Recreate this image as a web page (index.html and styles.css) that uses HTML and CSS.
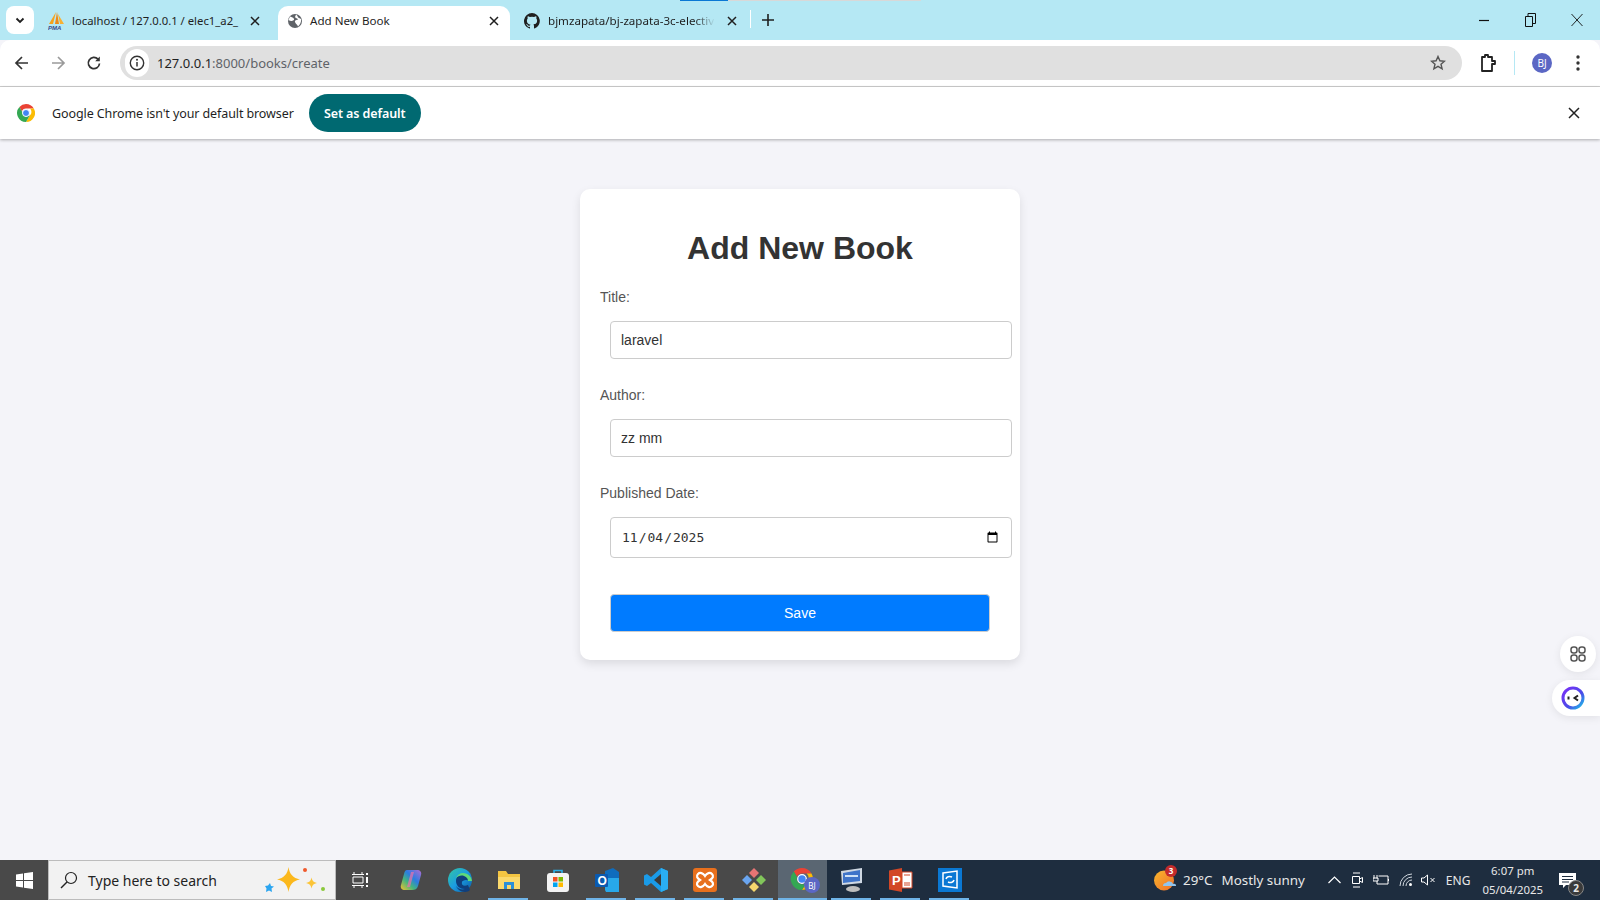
FILE: index.html
```html
<!DOCTYPE html>
<html lang="en">
<head>
    <meta charset="UTF-8">
    <title>Add New Book</title>
    <link rel="stylesheet" href="styles.css">
</head>
<body>
    <!-- Tab strip -->
    <div class="tabstrip">
        <div class="load-bar"><span></span></div>
        <div class="tab-search">
            <svg width="12" height="12" viewBox="0 0 12 12"><path d="M2.500 4.500 6 8l3.500-3.500" fill="none" stroke="#1f1f1f" stroke-width="1.800"/></svg>
        </div>
        <div class="tab tab-first">
            <svg class="fav" width="17" height="20" viewBox="0 0 17 20"><path d="M8 1 5 13H1z" fill="#f6a21c"/><path d="M9 1l2 12H7z" fill="#ef8a17"/><path d="M10 3l6 10h-4z" fill="#f8b133"/><text x="0" y="19" class="pma">PMA</text></svg>
            <span class="tab-title">localhost / 127.0.0.1 / elec1_a2_</span>
            <svg class="tab-x" width="10" height="10" viewBox="0 0 10 10"><path d="M1 1l8 8M9 1 1 9" stroke="#1f1f1f" stroke-width="1.500"/></svg>
        </div>
        <div class="tab tab-active">
            <svg class="fav" width="16" height="16" viewBox="0 0 16 16"><circle cx="8" cy="8" r="7" fill="#5f6368"/><path d="M3 3.500c2 .5 3.500 1 4 2.500S5 8 4 8 1.500 7 1.500 7zM9 1.500c2 1 1.500 3 3 3.500l2 1c.5 3-1 6-3 7.500-.5-2-2.500-2.500-3-4.500s2-2 3-2.500-3-1.500-3-2.500z" fill="#fff"/></svg>
            <span class="tab-title">Add New Book</span>
            <svg class="tab-x" width="10" height="10" viewBox="0 0 10 10"><path d="M1 1l8 8M9 1 1 9" stroke="#1f1f1f" stroke-width="1.500"/></svg>
        </div>
        <div class="tab tab-last">
            <svg class="fav" width="16" height="16" viewBox="0 0 16 16"><path fill="#1f1f1f" d="M8 0a8 8 0 0 0-2.500 15.600c.4.100.5-.2.500-.4v-1.400c-2.200.5-2.700-1-2.700-1-.4-.9-.9-1.200-.9-1.200-.7-.5.100-.5.100-.5.800.1 1.200.8 1.200.8.700 1.200 1.900.9 2.300.7.100-.5.300-.9.500-1.100-1.800-.2-3.600-.9-3.600-4 0-.9.300-1.600.8-2.100-.1-.2-.4-1 .1-2.100 0 0 .7-.2 2.200.8a7.600 7.600 0 0 1 4 0c1.500-1 2.200-.8 2.200-.8.400 1.100.2 1.900.1 2.100.5.600.8 1.300.8 2.100 0 3.100-1.900 3.700-3.700 3.900.3.300.6.800.6 1.500v2.200c0 .2.100.5.600.4A8 8 0 0 0 8 0z"/></svg>
            <span class="tab-title tab-fade">bjmzapata/bj-zapata-3c-electiv</span>
            <svg class="tab-x" width="10" height="10" viewBox="0 0 10 10"><path d="M1 1l8 8M9 1 1 9" stroke="#1f1f1f" stroke-width="1.500"/></svg>
        </div>
        <div class="tab-sep"></div>
        <svg class="tab-plus" width="12" height="12" viewBox="0 0 12 12"><path d="M6 0v12M0 6h12" stroke="#1f1f1f" stroke-width="1.600"/></svg>
        <div class="win-controls">
            <svg width="11" height="11" viewBox="0 0 11 11"><path d="M0 5.500h10" stroke="#111" stroke-width="1.200"/></svg>
            <svg width="11" height="14" viewBox="0 0 11 14"><path d="M.5 3.500h7v10h-7zM3 3.500V.5h7.500v10H7.500" fill="none" stroke="#111"/></svg>
            <svg width="12" height="14" viewBox="0 0 12 14"><path d="M.5 1l11 12M11.500 1 .5 13" stroke="#111" stroke-width=".9"/></svg>
        </div>
    </div>

    <!-- Toolbar -->
    <div class="toolbar">
        <div class="nav-btns">
            <svg width="16" height="16" viewBox="0 0 16 16"><path d="M14 8H2.500M8 2 2 8l6 6" fill="none" stroke="#333" stroke-width="1.700"/></svg>
            <svg width="16" height="16" viewBox="0 0 16 16"><path d="M2 8h11.500M8 2l6 6-6 6" fill="none" stroke="#9a9a9a" stroke-width="1.700"/></svg>
            <svg width="16" height="16" viewBox="0 0 16 16"><path d="M13.500 8.500A5.600 5.600 0 1 1 12 4.200" fill="none" stroke="#333" stroke-width="1.700"/><path d="M13.800 1.500v4.700H9.200z" fill="#333"/></svg>
        </div>
        <div class="omnibox">
            <div class="site-info">
                <svg width="16" height="16" viewBox="0 0 16 16"><circle cx="8" cy="8" r="6.700" fill="none" stroke="#333" stroke-width="1.400"/><path d="M8 7v4.500" stroke="#333" stroke-width="1.500"/><circle cx="8" cy="4.800" r="1" fill="#333"/></svg>
            </div>
            <span class="url"><b>127.0.0.1</b>:8000/books/create</span>
            <svg class="star" width="16" height="16" viewBox="0 0 16 16"><path d="M8 1.500l1.900 4.300 4.600.4-3.500 3 1.100 4.600L8 11.400l-4.100 2.400L5 9.200l-3.500-3 4.600-.4z" fill="none" stroke="#555" stroke-width="1.400"/></svg>
        </div>
        <svg class="ext" width="18" height="20" viewBox="0 0 18 20"><path d="M3 4h3V2h3v2h4v4h3v3h-3v7H3z" fill="#fff" stroke="#222" stroke-width="1.800" stroke-linejoin="round"/></svg>
        <div class="bar-sep"></div>
        <div class="avatar">BJ</div>
        <svg class="dots" width="4" height="16" viewBox="0 0 4 16"><circle cx="2" cy="2" r="1.700" fill="#333"/><circle cx="2" cy="8" r="1.700" fill="#333"/><circle cx="2" cy="14" r="1.700" fill="#333"/></svg>
    </div>

    <!-- Default browser notice -->
    <div class="infobar">
        <svg class="chrome-logo" width="18" height="18" viewBox="0 0 18 18">
            <path d="M9 0a9 9 0 0 1 7.800 4.500H9a4.500 4.500 0 0 0-4.200 2.900L2.400 3A9 9 0 0 1 9 0z" fill="#ea4335"/>
            <path d="M16.800 4.500A9 9 0 0 1 9 18l3.900-6.700a4.500 4.500 0 0 0 0-6.800z" fill="#fbbc04"/>
            <path d="M9 18A9 9 0 0 1 2.400 3l3.900 6.800A4.500 4.500 0 0 0 12.900 11.300z" fill="#34a853"/>
            <circle cx="9" cy="9" r="3.500" fill="#4285f4" stroke="#fff"/>
        </svg>
        <span class="info-text">Google Chrome isn't your default browser</span>
        <div class="set-default">Set as default</div>
        <svg class="info-x" width="12" height="12" viewBox="0 0 12 12"><path d="M1 1l10 10M11 1 1 11" stroke="#222" stroke-width="1.500"/></svg>
    </div>

    <!-- Page -->
    <main class="page">
        <div class="container">
            <h1>Add New Book</h1>
            <form>
                <label for="title">Title:</label>
                <input type="text" id="title" name="title" value="laravel">

                <label for="author">Author:</label>
                <input type="text" id="author" name="author" value="zz mm">

                <label for="published_date">Published Date:</label>
                <input type="date" id="published_date" name="published_date" value="2025-11-04">

                <button type="submit">Save</button>
            </form>
        </div>

        <div class="side-btn">
            <svg width="18" height="18" viewBox="0 0 18 18"><g fill="none" stroke="#555" stroke-width="1.500"><rect x="2" y="2" width="6" height="6" rx="2.500"/><rect x="10" y="2" width="6" height="6" rx="2.500"/><rect x="2" y="10" width="6" height="6" rx="2.500"/><rect x="10" y="10" width="6" height="6" rx="2.500"/></g></svg>
        </div>
        <div class="side-pill">
            <svg width="24" height="24" viewBox="0 0 24 24"><defs><linearGradient id="ring" x1="0" y1="0" x2="1" y2="1"><stop offset="0" stop-color="#7b2ff7"/><stop offset=".6" stop-color="#4a4be8"/><stop offset="1" stop-color="#1cc6e8"/></linearGradient></defs><circle cx="12" cy="12" r="10" fill="#fff" stroke="url(#ring)" stroke-width="3"/><path d="M7.500 10.500v3" stroke="#222" stroke-width="2"/><path d="M17 9.500 13.500 12l3.500 2.500" fill="none" stroke="#222" stroke-width="2"/></svg>
        </div>
    </main>

    <!-- Taskbar -->
    <footer class="taskbar">
        <div class="start">
            <svg width="17" height="17" viewBox="0 0 17 17"><path d="M0 2.500 7 1.500v6.500H0zM8 1.300 17 0v8H8zM0 9h7v6.500L0 14.500zM8 9h9v8l-9-1.300z" fill="#fff"/></svg>
        </div>
        <div class="searchbox">
            <svg width="18" height="18" viewBox="0 0 18 18"><circle cx="11" cy="7" r="5.500" fill="none" stroke="#222" stroke-width="1.200"/><path d="M7 11l-6 6" stroke="#222" stroke-width="1.500"/></svg>
            <span>Type here to search</span>
            <svg class="sparkle" width="64" height="30" viewBox="0 0 64 30">
                <path d="M26.500 2c1 7 4.500 11 11.500 12.500-7 1-10.500 5.500-11.500 12.500-1-7-4.500-11.500-11.500-12.500C22 13 25.500 9 26.500 2z" fill="#fbb81c"/>
                <path d="M49.500 12.500c.5 3 2 5 5.500 5.500-3.500.5-5 2.500-5.500 5.500-.5-3-2-5-5.500-5.500 3.500-.5 5-2.500 5.500-5.500z" fill="#fbc437"/>
                <path d="M8 18l1 3 3 .5-2.500 2L10 27l-3-1.500L4 27l.5-3.500L3 21l3-.5z" fill="#2ba5f0"/>
                <circle cx="43" cy="5" r="2" fill="#f0592b"/><circle cx="61" cy="24" r="2" fill="#8bc93b"/>
            </svg>
        </div>
        <div class="task-icons">
            <div class="task-cell">
                <svg class="task-view" width="16" height="16" viewBox="0 0 16 16"><path d="M2 0v2M10 0v2M0 2.500h12M1 5h10v6H1zM0 13.500h12M2 14v2M10 14v2" stroke="#fff" fill="none"/><path d="M14 1h2v2h-2zM14 5h2v6h-2zM14 13h2v2h-2z" fill="#fff"/></svg>
            </div>
            <div class="task-cell">
                <svg width="24" height="24" viewBox="0 0 24 24"><defs><linearGradient id="cop" x1="0" y1="1" x2="1" y2="0"><stop offset="0" stop-color="#f6c02c"/><stop offset=".35" stop-color="#45b57d"/><stop offset=".6" stop-color="#2a7de1"/><stop offset="1" stop-color="#b36bd4"/></linearGradient></defs><path d="M8 2h10c3 0 5 2 4 5l-3 11c-1 3-3 4-6 4H6c-3 0-5-2-4-5L5 6c.5-2.500 1.500-4 3-4z" fill="url(#cop)"/><path d="M12 4h3l-4 15H8z" fill="#f070a8" opacity=".7"/></svg>
            </div>
            <div class="task-cell">
                <svg width="24" height="24" viewBox="0 0 24 24"><defs><linearGradient id="edg" x1="0" y1="0" x2="1" y2="1"><stop offset="0" stop-color="#34c6a0"/><stop offset=".5" stop-color="#1b9de2"/><stop offset="1" stop-color="#0c59a4"/></linearGradient></defs><circle cx="12" cy="12" r="12" fill="url(#edg)"/><path d="M24 13c0-4-4-7-9-7-4 0-7 3-7 7 0 5 4 8 9 8-3 1-7 0-9-3 1 3 5 6 9 6 2 0 4-1 5-2l-2-5c-4 2-7 0-6-3 0-1 2-2 4-2 3 0 4 1 6 1z" fill="#0f3f7d"/><path d="M24 13c0-4-4-8-9-8-3 0-6 2-7 5 2-2 5-3 8-2 3 1 4 3 4 5z" fill="#5fd97a"/></svg>
            </div>
            <div class="task-cell running">
                <svg width="24" height="20" viewBox="0 0 24 20"><path d="M1 1h8l2 3h12v15H1z" fill="#f4c542"/><path d="M1 7h22v12H1z" fill="#fbd96c"/><path d="M7 12h10v7h-3v-4h-4v4H7z" fill="#2b8fd8"/></svg>
            </div>
            <div class="task-cell">
                <svg width="24" height="24" viewBox="0 0 24 24"><path d="M8 6V2.500h8V6" fill="none" stroke="#2bb0e8" stroke-width="1.600"/><rect x="1" y="5" width="22" height="19" rx="3" fill="#f3f3f3"/><rect x="7" y="9" width="4.500" height="4.500" fill="#f25022"/><rect x="12.500" y="9" width="4.500" height="4.500" fill="#7fba00"/><rect x="7" y="14.500" width="4.500" height="4.500" fill="#00a4ef"/><rect x="12.500" y="14.500" width="4.500" height="4.500" fill="#ffb900"/></svg>
            </div>
            <div class="task-cell running">
                <svg width="24" height="24" viewBox="0 0 24 24"><path d="M10 3l8-3 6 4v15H10z" fill="#0f6cbd"/><path d="M10 10h14v14H11l-1-2z" fill="#28a8ea"/><rect y="6" width="13" height="13" rx="1" fill="#0a5ab0"/><text x="2.500" y="16.500" class="ol">O</text></svg>
            </div>
            <div class="task-cell running">
                <svg width="24" height="24" viewBox="0 0 24 24"><path d="M17 0l7 3v18l-7 3-10-9-4 3-3-1.500v-9L3 6l4 3z" fill="#1a9be8"/><path d="M17 0l7 3v18l-7 3z" fill="#2aaef2"/><path d="M17 6 10 12l7 6z" fill="#3a3a3a"/></svg>
            </div>
            <div class="task-cell running">
                <svg width="24" height="24" viewBox="0 0 24 24"><rect width="24" height="24" rx="3" fill="#e8701d"/><path d="M5 6c2-2 5-1 7 2 2-3 5-4 7-2s1 4-2 6c3 2 4 4 2 6s-5 1-7-2c-2 3-5 4-7 2s-1-4 2-6c-3-2-4-4-2-6z" fill="none" stroke="#fff" stroke-width="2.200"/></svg>
            </div>
            <div class="task-cell running">
                <svg width="24" height="24" viewBox="0 0 24 24"><path d="M12 0l5 5-5 5-5-5z" fill="#e87474"/><path d="M12 14l5 5-5 5-5-5z" fill="#f5d76e"/><path d="M5 7l5 5-5 5-5-5z" fill="#6aa5f0"/><path d="M19 7l5 5-5 5-5-5z" fill="#82c55a"/></svg>
            </div>
            <div class="task-cell running active">
                <svg width="26" height="26" viewBox="0 0 26 26">
                    <path d="M12 1a11 11 0 0 1 9.500 5.500H12a5.500 5.500 0 0 0-5 3.300L3.800 4.500A11 11 0 0 1 12 1z" fill="#ea4335"/>
                    <path d="M21.500 6.500A11 11 0 0 1 12 23l4.700-8a5.500 5.500 0 0 0 0-8.500z" fill="#fbbc04"/>
                    <path d="M12 23A11 11 0 0 1 3.800 4.500L7 10a5.500 5.500 0 0 0 9.700 5z" fill="#34a853"/>
                    <circle cx="12" cy="12" r="4.300" fill="#4285f4" stroke="#fff" stroke-width="1.200"/>
                </svg>
                <div class="badge-bj">BJ</div>
            </div>
            <div class="task-cell running">
                <svg width="24" height="24" viewBox="0 0 24 24"><path d="M1 3l21-3v15L2 17z" fill="#cfd8e3"/><path d="M3 5l17-3v11L3 15z" fill="#3f74c9"/><path d="M5 7h13v2H5z" fill="#cfe2f7"/><ellipse cx="13" cy="21" rx="7" ry="3" fill="#bdbdbd"/></svg>
            </div>
            <div class="task-cell running">
                <svg width="24" height="24" viewBox="0 0 24 24"><path d="M13 0v24L0 21.500v-19z" fill="#d24726"/><path d="M13 4h10v16H13z" fill="#fff" stroke="#d24726"/><path d="M15 7h6M15 15h6M15 17h6" stroke="#d24726"/><text x="3" y="17" class="pp">P</text></svg>
            </div>
            <div class="task-cell running">
                <svg width="24" height="24" viewBox="0 0 24 24"><rect width="24" height="24" fill="#0a78d4"/><path d="M5 5l14-2v17L5 18z" fill="none" stroke="#fff" stroke-width="1.500"/><path d="M8 11c.5-2 3-3.500 6-2M16 12c-.5 2-3 3.500-6 2" fill="none" stroke="#fff" stroke-width="1.500"/></svg>
            </div>
        </div>
        <div class="tray">
            <div class="weather-icon">
                <svg width="22" height="21" viewBox="0 0 22 21"><defs><linearGradient id="sun" x1="0" y1="0" x2="1" y2="1"><stop offset="0" stop-color="#f9b62c"/><stop offset="1" stop-color="#ef6f2b"/></linearGradient></defs><circle cx="10" cy="10.500" r="10" fill="url(#sun)"/><path d="M9 16a3 3 0 0 1 3-3 4 4 0 0 1 7 1 2 2 0 0 1 3 2z" fill="#8fc4ee"/></svg>
                <span>3</span>
            </div>
            <span class="temp">29°C</span>
            <span class="sky">Mostly sunny</span>
            <svg class="tray-up" width="13" height="8" viewBox="0 0 13 8"><path d="M.5 7 6.500 1l6 6" fill="none" stroke="#fff" stroke-width="1.200"/></svg>
            <svg class="tray-ic" width="12" height="18" viewBox="0 0 12 18"><path d="M1.500 5.500h7v7h-7zM8.500 8l3-1.500v5l-3-1.500M2 2h7M2 16h7" fill="none" stroke="#fff"/></svg>
            <svg class="tray-ic" width="16" height="12" viewBox="0 0 16 12"><path d="M1 4.500V1M4 4.500V1M0 4h5v3H0zM5.500 2H15v8H4V7M15.500 5v2" fill="none" stroke="#fff"/></svg>
            <svg class="tray-ic" width="14" height="14" viewBox="0 0 14 14"><path d="M1 13A12 12 0 0 1 13 1M4 13a9 9 0 0 1 9-9M7 13a6 6 0 0 1 6-6" fill="none" stroke="#cfd6dd"/><circle cx="11.500" cy="11.500" r="1.500" fill="#fff"/></svg>
            <svg class="tray-ic tray-vol" width="15" height="12" viewBox="0 0 15 12"><path d="M.5 4H3L6.500 1v10L3 8H.5zM9.500 4l4 4M13.500 4l-4 4" fill="none" stroke="#fff"/></svg>
            <span class="lang">ENG</span>
            <div class="clock"><div>6:07 pm</div><div>05/04/2025</div></div>
            <div class="notify">
                <svg width="17" height="15" viewBox="0 0 17 15"><path d="M0 0h17v12H7l-3 3v-3H0z" fill="#fff"/><path d="M3 3.500h11M3 6.500h11M3 9h7" stroke="#1e2d3f"/></svg>
                <span class="notify-count">2</span>
            </div>
        </div>
    </footer>
</body>
</html>
```

FILE: styles.css
```css
/* General Reset */
* {
    margin: 0;
    padding: 0;
    box-sizing: border-box;
}

body {
    font-family: 'Noto Sans', sans-serif;
    background: #f4f4f9;
    display: flex;
    flex-direction: column;
    height: 100vh;
    overflow: hidden;
    color: #333;
}

/* Tab strip */
.tabstrip {
    position: relative;
    display: flex;
    align-items: flex-end;
    height: 40px;
    flex: none;
    background: #b5e8f4;
    font-size: 11.6px;
    color: #1f1f1f;
}

.load-bar {
    position: absolute;
    top: 0;
    left: 680px;
    width: 241px;
    height: 1px;
    background: #d8d8d8;
}

.load-bar span {
    display: block;
    width: 48px;
    height: 1px;
    background: #0a78d4;
}

.tab-search {
    display: flex;
    justify-content: center;
    align-items: center;
    width: 28px;
    height: 28px;
    margin: 0 8px 6px 6px;
    background: #fff;
    border-radius: 8px;
}

.tab {
    display: flex;
    align-items: center;
    height: 34px;
    padding-bottom: 5px;
    flex: none;
}

.tab-first {
    width: 236px;
    padding-left: 6px;
    font-size: 11.3px;
}

.tab-first .tab-x {
    margin-right: 18px;
}

.tab-active {
    width: 232px;
    padding-left: 9px;
    background: #fff;
    border-radius: 10px 10px 0 0;
}

.tab-last {
    width: 238px;
    padding-left: 14px;
}

.fav {
    flex: none;
}

.pma {
    font: italic bold 6px 'Liberation Sans', sans-serif;
    fill: #3b4a8c;
}

.tab-title {
    margin-left: 7px;
    flex: 1;
    white-space: nowrap;
}

.tab-last .tab-title {
    margin-left: 8px;
}

.tab-fade {
    -webkit-mask-image: linear-gradient(to right, #000 88%, transparent);
    mask-image: linear-gradient(to right, #000 88%, transparent);
}

.tab-x {
    flex: none;
    margin: 0 11px 0 12px;
}

.tab-sep {
    width: 1px;
    height: 18px;
    margin: 0 0 12px 2px;
    background: #fff;
}

.tab-plus {
    margin: 0 0 14px 11px;
}

.win-controls {
    display: flex;
    align-items: center;
    gap: 35px;
    margin: 0 17px 13px auto;
}

/* Toolbar */
.toolbar {
    display: flex;
    align-items: center;
    height: 47px;
    flex: none;
    background: #fff;
    border-bottom: 1px solid #cfcfcf;
    border-radius: 10px 10px 0 0;
}

.nav-btns {
    display: flex;
    gap: 20px;
    margin-left: 14px;
}

.omnibox {
    display: flex;
    align-items: center;
    width: 1342px;
    height: 34px;
    margin-left: 18px;
    background: #e0e0e0;
    border-radius: 17px;
    font-size: 13px;
    color: #5f6368;
}

.site-info {
    display: flex;
    justify-content: center;
    align-items: center;
    width: 24px;
    height: 28px;
    margin-left: 5px;
    background: #fff;
    border-radius: 14px;
}

.url {
    margin-left: 8px;
    flex: 1;
}

.url b {
    font-weight: normal;
    color: #1f1f1f;
}

.star {
    margin-right: 16px;
}

.ext {
    margin-left: 17px;
}

.bar-sep {
    width: 1px;
    height: 24px;
    margin-left: 17px;
    background: #b5e8f4;
}

.avatar {
    display: flex;
    justify-content: center;
    align-items: center;
    width: 20px;
    height: 20px;
    margin-left: 17px;
    border-radius: 50%;
    background: #5b67c4;
    color: #fff;
    font-size: 10px;
}

.dots {
    margin-left: 24px;
}

/* Infobar */
.infobar {
    position: relative;
    display: flex;
    align-items: center;
    height: 52px;
    flex: none;
    background: #fff;
    box-shadow: 0 1px 3px rgba(0, 0, 0, 0.3);
    font-size: 12.5px;
    letter-spacing: -0.1px;
    color: #1f1f1f;
}

.chrome-logo {
    margin-left: 17px;
}

.info-text {
    margin-left: 17px;
}

.set-default {
    display: flex;
    justify-content: center;
    align-items: center;
    width: 112px;
    height: 38px;
    margin-left: 15px;
    border-radius: 19px;
    background: #006971;
    color: #fff;
    font-weight: 600;
}

.info-x {
    margin: 0 20px 0 auto;
}

/* Form card */
.page {
    flex: 1;
    position: relative;
    display: flex;
    justify-content: center;
    align-items: flex-start;
    font-family: 'Liberation Sans', Arial, sans-serif;
}

.container {
    width: 440px;
    margin-top: 50px;
    padding: 20px;
    background: #fff;
    border-radius: 10px;
    box-shadow: 0 4px 10px rgba(0, 0, 0, 0.1);
}

h1 {
    font-size: 32px;
    line-height: 37px;
    margin: 21px 0 22px;
    text-align: center;
    color: #333;
}

label {
    display: block;
    font-size: 14px;
    line-height: 16px;
    color: #555;
}

input {
    display: block;
    width: 402px;
    height: 38px;
    margin: 16px 0 28px 10px;
    padding: 10px;
    border: 1px solid #ccc;
    border-radius: 4px;
    background: #fff;
    font-family: 'Liberation Sans', Arial, sans-serif;
    font-size: 14px;
    color: #333;
}

input[type="date"] {
    height: 41px;
    margin-bottom: 36px;
    font-family: 'DejaVu Sans Mono', monospace;
    font-size: 13px;
}

button {
    display: block;
    width: 380px;
    height: 38px;
    margin: 0 0 8px 10px;
    background-color: #007bff;
    border: 1px solid #ccc;
    border-radius: 4px;
    color: #fff;
    font-family: 'Liberation Sans', Arial, sans-serif;
    font-size: 14px;
    cursor: pointer;
}

.side-btn {
    position: absolute;
    top: 497px;
    right: 4px;
    display: flex;
    justify-content: center;
    align-items: center;
    width: 36px;
    height: 36px;
    border-radius: 50%;
    background: #fff;
    box-shadow: 0 2px 8px rgba(0, 0, 0, 0.08);
}

.side-pill {
    position: absolute;
    top: 541px;
    right: 0;
    display: flex;
    align-items: center;
    width: 48px;
    height: 36px;
    padding-left: 9px;
    border-radius: 18px 0 0 18px;
    background: #fff;
    box-shadow: 0 2px 8px rgba(0, 0, 0, 0.08);
}

/* Taskbar */
.taskbar {
    display: flex;
    height: 40px;
    flex: none;
    background: linear-gradient(to right, #494949 0, #494949 48.5%, #1e2d3f 51.5%, #1e2d3f 100%);
    color: #fff;
    font-size: 14px;
}

.start {
    display: flex;
    justify-content: center;
    align-items: center;
    width: 48px;
}

.searchbox {
    display: flex;
    align-items: center;
    width: 288px;
    padding-left: 11px;
    background: #f2f2f2;
    border: 1px solid #bcbcbc;
    color: #222;
    font-size: 14px;
}

.searchbox span {
    margin-left: 10px;
}

.sparkle {
    margin-left: auto;
    margin-right: 9px;
}

.task-icons {
    display: flex;
    margin-left: 1px;
}

.task-cell {
    position: relative;
    display: flex;
    justify-content: center;
    align-items: center;
    width: 49px;
}

.task-view {
    margin-right: 4px;
}

.task-cell.running::after {
    content: "";
    position: absolute;
    bottom: 0;
    left: 4px;
    right: 5px;
    height: 2px;
    background: #6fb4e8;
}

.task-cell.active {
    background: #5a6672;
}

.task-cell.active::after {
    left: 0;
    right: 0;
}

.badge-bj {
    position: absolute;
    top: 17px;
    left: 26px;
    display: flex;
    justify-content: center;
    align-items: center;
    width: 16px;
    height: 16px;
    border-radius: 50%;
    background: #5b67c4;
    font-size: 8px;
}

.ol {
    font: bold 12px 'Liberation Sans', sans-serif;
    fill: #fff;
}

.pp {
    font: bold 13px 'Liberation Sans', sans-serif;
    fill: #fff;
}

.tray {
    display: flex;
    align-items: center;
    flex: 1;
    font-size: 13.4px;
    color: #e8e8e8;
}

.weather-icon {
    position: relative;
    display: flex;
    margin-left: auto;
}

.weather-icon span {
    position: absolute;
    top: -5px;
    right: -1px;
    width: 12px;
    height: 12px;
    border-radius: 50%;
    background: #c42b2b;
    color: #fff;
    font-size: 8px;
    font-weight: 700;
    line-height: 12px;
    text-align: center;
}

.temp {
    margin-left: 7px;
}

.sky {
    margin-left: 9px;
}

.tray-up {
    margin-left: 23px;
}

.tray-ic {
    margin-left: 10px;
}

.tray-vol {
    margin-left: 8px;
}

.lang {
    margin-left: 10px;
    font-size: 12px;
}

.clock {
    margin-left: 12px;
    font-size: 11.4px;
    line-height: 19px;
    text-align: center;
}

.notify {
    position: relative;
    display: flex;
    align-items: center;
    width: 29px;
    height: 100%;
    margin: 0 12px 0 16px;
}

.notify-count {
    position: absolute;
    top: 20px;
    left: 9px;
    width: 16px;
    height: 16px;
    border-radius: 50%;
    background: #3a3a3a;
    border: 1px solid #888;
    font-size: 10px;
    font-weight: 700;
    line-height: 14px;
    text-align: center;
}
```
